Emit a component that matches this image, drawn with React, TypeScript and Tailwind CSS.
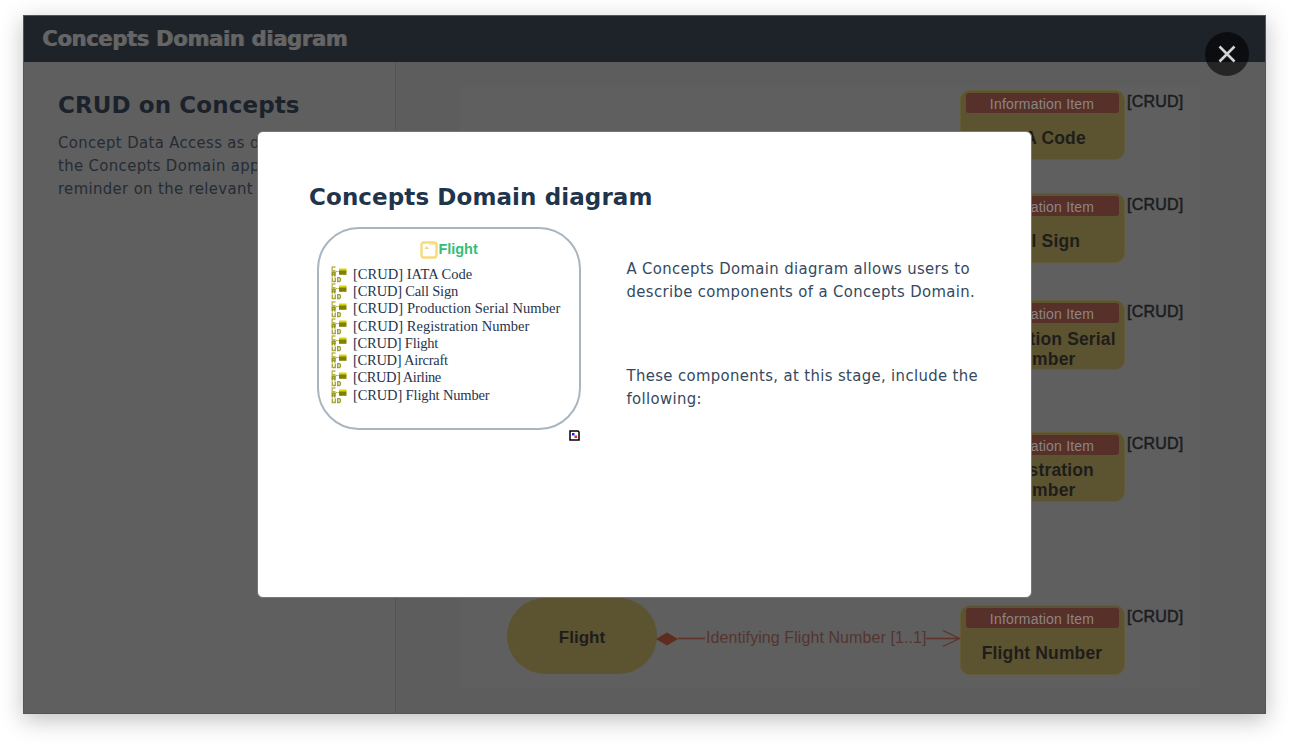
import React from "react";

const items = [
  { name: "IATA Code", tracking: "tracking-[0.02px]" },
  { name: "Call Sign", tracking: "tracking-[-0.18px]" },
  { name: "Production Serial Number", tracking: "tracking-[0.05px]" },
  { name: "Registration Number", tracking: "tracking-[0.03px]" },
  { name: "Flight", tracking: "tracking-[-0.25px]" },
  { name: "Aircraft", tracking: "tracking-[-0.26px]" },
  { name: "Airline", tracking: "tracking-[-0.43px]" },
  { name: "Flight Number", tracking: "tracking-[-0.14px]" },
];

const cards = [
  { top: "top-[90px]", lines: ["IATA Code"], crud: "pt-[2px]", pad: "pt-[15px]" },
  { top: "top-[193px]", lines: ["Call Sign"], crud: "pt-[2px]", pad: "pt-[15px]" },
  { top: "top-[300px]", lines: ["Production Serial", "Number"], crud: "pt-[2px]", pad: "pt-[6px]" },
  { top: "top-[432px]", lines: ["Registration", "Number"], crud: "pt-[2px]", pad: "pt-[5px]" },
  { top: "top-[605px]", lines: ["Flight Number"], crud: "pt-[2px]", pad: "pt-[15px]" },
];

type Card = (typeof cards)[number];

function InfoItem({ top, lines, crud, pad }: Card) {
  return (
    <div className={"absolute left-[959.5px] flex " + top}>
      <div className="flex h-[70px] w-[165px] flex-col rounded-[10px] border border-[#645b35] bg-[#5c5331] px-[5px] pt-[2px]">
        <div className="h-[20px] rounded-[3px] bg-[#58302a] text-center text-[14px] leading-[22px] text-[#8b8584]">
          <span className="tracking-[0.2px]">Information Item</span>
        </div>
        <div className={"text-center text-[17.5px] leading-[20px] font-bold tracking-[0.15px] whitespace-nowrap text-[#1f1d1a] " + pad}>
          {lines.map((l) => (
            <div key={l}>{l}</div>
          ))}
        </div>
      </div>
      <span className={"pl-[2.5px] text-[16px] leading-[20px] tracking-[0.2px] text-[#1b1c1e] [-webkit-text-stroke:0.5px_#1b1c1e] " + crud}>[CRUD]</span>
    </div>
  );
}

function CrudIcon() {
  return (
    <svg width="16" height="17" viewBox="0 0 16 17" className="shrink-0" fill="none">
      <path d="M4.500 1H1.200V4.800H4.500" stroke="#b8b84e" strokeWidth="1.400" />
      <path d="M1.300 10.500V6.300H4V8.200H1.300M3 8.200L4.200 10.500" stroke="#96961e" strokeWidth="1.600" />
      <path d="M1.300 11.500V15.500H4.300V11.500" stroke="#a8a83c" strokeWidth="1.400" />
      <path d="M6.700 11.600H8.400L9.300 12.500V14.700L8.400 15.500H6.700Z" stroke="#a0a02c" strokeWidth="1.400" />
      <path d="M5 5.500H8" stroke="#b0b040" strokeDasharray="1.500 0.700" />
      <path d="M8 2.500h7.500v2.500h-7.500z" fill="#d6d600" />
      <path d="M8 4.500h7.500v4.300h-7.500z" fill="#808000" />
    </svg>
  );
}

export default function App() {
  return (
    <div className="h-[745px] overflow-hidden bg-white pt-[15px] pl-[23px] font-['DejaVu_Sans',sans-serif]">
      <div className="flex h-[699px] w-[1243px] flex-col border border-[#555] bg-[#5f5f5f] shadow-[0_6px_22px_rgba(0,0,0,0.25)]">
        <header className="flex h-[46px] shrink-0 items-center bg-[#1e2229] pt-[2px] pl-[18px] text-[#656565]">
          <h1 className="text-[21px] font-bold tracking-[-0.28px] [text-shadow:1px_0_0_#555]">Concepts Domain diagram</h1>
        </header>
        <div className="flex flex-1">
          <aside className="w-[372px] border-r border-[#545454] pt-[28px] pl-[34px] text-[#1c222b]">
            <h2 className="text-[23px] leading-[30px] font-bold tracking-[0.1px]">CRUD on Concepts</h2>
            <p className="mt-[11px] w-[330px] text-[16.5px] leading-[23px] tracking-[0.38px] whitespace-nowrap text-[#252c35] [font-family:'DejaVu_Sans_Condensed','DejaVu_Sans',sans-serif]">
              Concept Data Access as defined in
              <br />
              the Concepts Domain appears as a
              <br />
              reminder on the relevant concepts
            </p>
          </aside>
          <main className="flex-1 bg-[#5d5d5d] pt-[25px] pl-[64px]">
            <div className="h-[601px] w-[740px] bg-[#5f5f5f]" />
          </main>
        </div>
      </div>

      <div className="font-['Liberation_Sans',Arial,sans-serif]">
        {cards.map((c) => (
          <InfoItem key={c.top} {...c} />
        ))}
        <div className="absolute top-[598px] left-[507px] flex h-[76px] w-[150px] items-center justify-center rounded-[38px] bg-[#5c5331] pt-[3px] text-[17px] font-bold text-[#1f1d1a]">Flight</div>
        <svg className="absolute top-[620px] left-[656px]" width="306" height="36" fill="none" stroke="#5f3229" strokeWidth="1.3">
          <path d="M0 19L11 12.5L22 19L11 25.5Z" fill="#5f2c20" stroke="none" />
          <path d="M22 18.5H49M270 18.5H303M287 10.5L303.500 18.500L287 26.500" />
        </svg>
        <span className="absolute top-[628px] left-[706px] text-[16px] leading-[20px] tracking-[0.08px] whitespace-nowrap text-[#54352f]">Identifying Flight Number [1..1]</span>
      </div>

      <section className="absolute top-[131px] left-[257px] h-[467px] w-[775px] rounded-[6px] border border-[#777] bg-white pt-[50px] pl-[51px] text-[#1f344d]">
        <h2 className="text-[23px] leading-[30px] font-bold tracking-[0.1px]">Concepts Domain diagram</h2>
        <div className="flex">
          <div className="mt-[15px] ml-[8px] w-[264px] shrink-0">
            <div className="h-[203px] rounded-[42px] border-2 border-[#a9b6bf] pt-[12px] pl-[12px]">
              <div className="flex h-[18px] items-center pl-[89px]">
                <svg width="18" height="18" viewBox="0 0 18 18" fill="none">
                  <rect x="1.500" y="1.500" width="15" height="15" rx="2.500" stroke="#f7da7c" strokeWidth="2.400" />
                  <path d="M4.500 8L6.800 5L9 8Z" fill="#ecd591" />
                  <path d="M9.500 3.500H15" stroke="#f9e7ae" />
                </svg>
                <span className="pl-[0.5px] font-['Liberation_Sans',Arial,sans-serif] text-[14.500px] font-bold tracking-[-0.05px] text-[#36bd75]">Flight</span>
              </div>
              <ul className="pt-[7px] font-['Liberation_Serif','Times_New_Roman',serif] text-[14.500px]">
                {items.map((n) => (
                  <li key={n.name} className="flex h-[17.250px] items-center whitespace-nowrap">
                    <CrudIcon />
                    <span className={"pl-[6px] " + n.tracking}>[CRUD] {n.name}</span>
                  </li>
                ))}
              </ul>
            </div>
            <svg width="11" height="11" viewBox="0 0 11 11" className="ml-[252px]">
              <path d="M1 1H9L10 2V10H1Z" fill="#fff" stroke="#000" strokeWidth="1.500" />
              <path d="M3 3h2.500v2.500h-2.500z" fill="#2020ff" />
              <path d="M5.500 5.500h2.500v2.500h-2.500z" fill="#f22" />
            </svg>
          </div>
          <div className="pt-[45px] pl-[45.500px] text-[16.5px] leading-[23px] tracking-[0.37px] whitespace-nowrap text-[#34495e] [font-family:'DejaVu_Sans_Condensed','DejaVu_Sans',sans-serif]">
            <p>
              A Concepts Domain diagram allows users to
              <br />
              describe components of a Concepts Domain.
            </p>
            <p className="mt-[61px]">
              These components, at this stage, include the
              <br />
              following:
            </p>
          </div>
        </div>
      </section>

      <button aria-label="Close" className="absolute top-[32px] left-[1205px] flex h-[44px] w-[44px] items-center justify-center rounded-full bg-black/60">
        <svg width="18" height="18" viewBox="0 0 18 18" stroke="#d4d4d4" strokeWidth="2.600">
          <path d="M1.500 1.500L16.500 16.500M16.500 1.500L1.500 16.500" />
        </svg>
      </button>
    </div>
  );
}
